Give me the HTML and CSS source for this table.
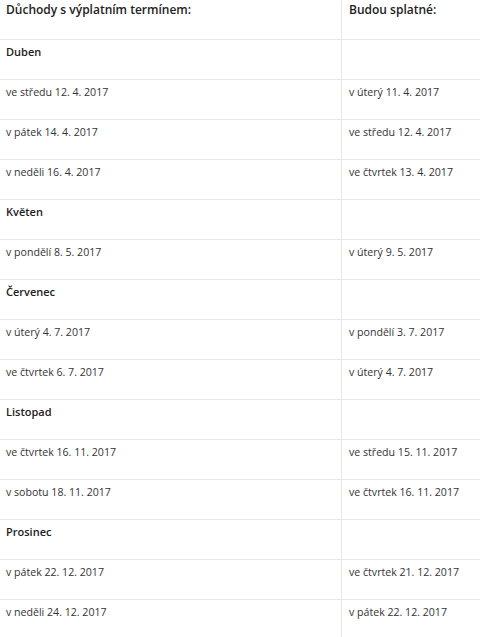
FILE: index.html
```html
<!doctype html>
<html lang="cs">
<head>
    <meta charset="UTF-8">
    <title>Výplata důchodů</title>

    <link rel="stylesheet" href="styles.css">
</head>
<body>

<table class="pay-table">
    <thead>
        <tr>
            <th class="pay-table__col-main">Důchody s výplatním termínem:</th>
            <th>Budou splatné:</th>
        </tr>
    </thead>
    <tbody>
        <tr class="pay-table__month"><td>Duben</td><td></td></tr>
        <tr><td>ve středu 12. 4. 2017</td><td>v úterý 11. 4. 2017</td></tr>
        <tr><td>v pátek 14. 4. 2017</td><td>ve středu 12. 4. 2017</td></tr>
        <tr><td>v neděli 16. 4. 2017</td><td>ve čtvrtek 13. 4. 2017</td></tr>

        <tr class="pay-table__month"><td>Květen</td><td></td></tr>
        <tr><td>v pondělí 8. 5. 2017</td><td>v úterý 9. 5. 2017</td></tr>

        <tr class="pay-table__month"><td>Červenec</td><td></td></tr>
        <tr><td>v úterý 4. 7. 2017</td><td>v pondělí 3. 7. 2017</td></tr>
        <tr><td>ve čtvrtek 6. 7. 2017</td><td>v úterý 4. 7. 2017</td></tr>

        <tr class="pay-table__month"><td>Listopad</td><td></td></tr>
        <tr><td>ve čtvrtek 16. 11. 2017</td><td>ve středu 15. 11. 2017</td></tr>
        <tr><td>v sobotu 18. 11. 2017</td><td>ve čtvrtek 16. 11. 2017</td></tr>

        <tr class="pay-table__month"><td>Prosinec</td><td></td></tr>
        <tr><td>v pátek 22. 12. 2017</td><td>ve čtvrtek 21. 12. 2017</td></tr>
        <tr><td>v neděli 24. 12. 2017</td><td>v pátek 22. 12. 2017</td></tr>
    </tbody>
</table>

</body>
</html>
```

FILE: styles.css
```css
* {
    margin: 0;
    padding: 0;
}

body {
    font-family: "Open Sans", "Liberation Sans", sans-serif;
    font-size: 10.6px;
    color: #333;
    background: #fff;
}

.pay-table {
    width: 100%;
    border-collapse: separate;
    border-spacing: 0;
    table-layout: fixed;
}

.pay-table th,
.pay-table td {
    height: 40px;
    padding: 4px 6px 0 6px;
    line-height: 16px;
    text-align: left;
    vertical-align: top;
    border-bottom: 1px solid #e6e6e6;
    box-sizing: border-box;
}

.pay-table th {
    font-size: 12px;
    font-weight: 600;
    color: #222;
    padding-top: 2px;
}

.pay-table th + th,
.pay-table td + td {
    padding-left: 7px;
}

.pay-table__col-main {
    width: 342px;
}

.pay-table th:first-child,
.pay-table td:first-child {
    border-right: 1px solid #e6e6e6;
}

.pay-table__month td {
    font-size: 11px;
    font-weight: 600;
    color: #222;
}
```
